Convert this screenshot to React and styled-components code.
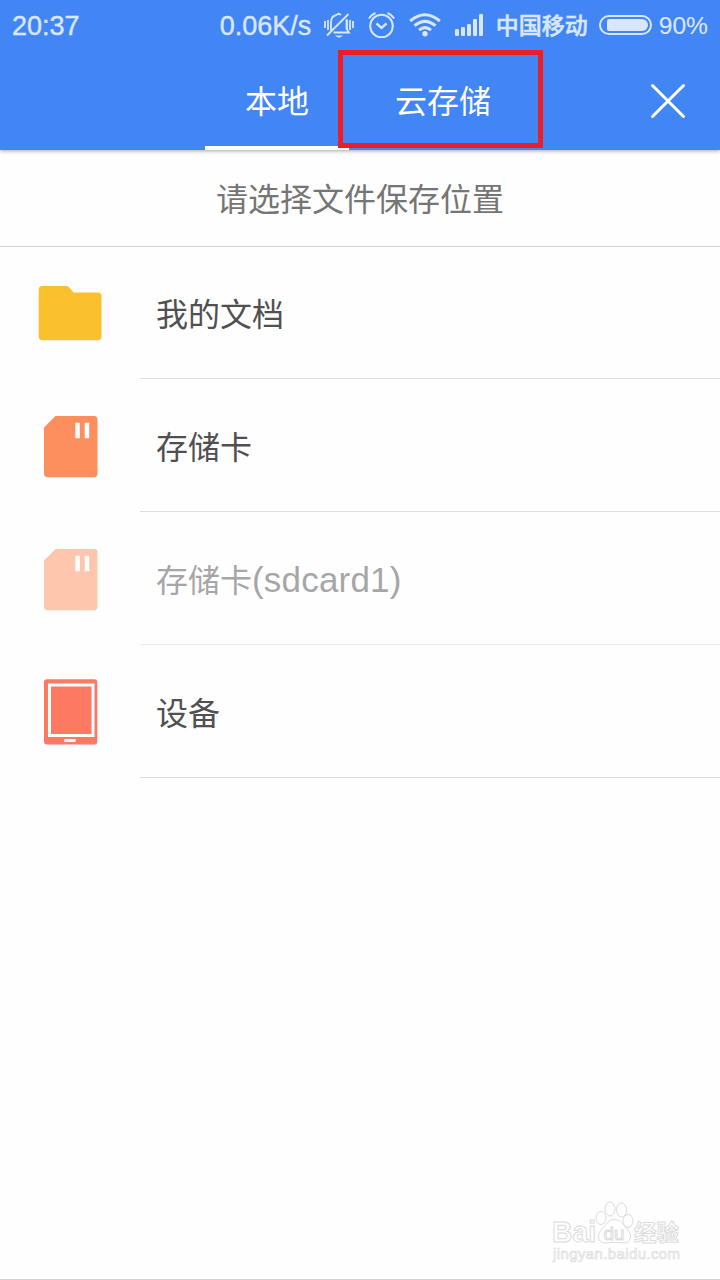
import React from "react";
import styled, { createGlobalStyle } from "styled-components";

const GlobalStyle = createGlobalStyle`
  * {
    box-sizing: border-box;
  }
  body {
    margin: 0;
    background-color: #fefefe;
  }
`;

const Screen = styled.div`
  position: relative;
  display: flex;
  flex-direction: column;
  width: 720px;
  height: 1280px;
  border-bottom: 1px solid #d2d2d2;
  background-color: #fefefe;
  font-family: "Liberation Sans", "Noto Sans CJK SC", sans-serif;
  overflow: hidden;
`;

const Header = styled.header`
  height: 150px;
  flex: none;
  background-color: #4285f5;
  box-shadow: 0 1px 4px rgba(0, 0, 0, 0.35);
`;

const StatusBar = styled.div`
  display: flex;
  align-items: center;
  height: 50px;
  padding: 0 12px;
  color: #d9e7fd;
`;

const StatusText = styled.span`
  font-size: ${(props) => props.$size || 27}px;
  line-height: 50px;
  height: 48px;
  white-space: nowrap;
  -webkit-text-stroke: ${(props) => props.$stroke || 0.4}px #d9e7fd;
`;

const Speed = styled(StatusText)`
  margin-left: auto;
  margin-right: 13px;
`;

const StatusIcons = styled.div`
  display: flex;
  align-items: center;
  gap: 13.5px;

  svg {
    display: block;
    flex: none;
  }
`;

const Carrier = styled.span`
  width: 92px;
  height: 50px;
  margin-left: 13px;
  margin-right: 11px;
  font-size: 23px;
  font-weight: 500;
  line-height: 52px;
  white-space: nowrap;
  -webkit-text-stroke: 0.5px #d9e7fd;
`;

const Battery = styled.div`
  width: 53px;
  height: 20px;
  margin-right: 7px;
  padding: 2px 2px 2px 6px;
  border: 2px solid #d9e7fd;
  border-radius: 10px;
`;

const BatteryLevel = styled.div`
  height: 12px;
  border-radius: 2px 6px 6px 2px;
  background-color: #d9e7fd;
`;

const TabBar = styled.nav`
  position: relative;
  display: flex;
  gap: 6px;
  height: 100px;
  padding-left: 205px;
`;

const Tab = styled.div`
  height: 100px;
  padding: 0 40px;
  border-bottom: 4px solid ${(props) => (props.$active ? "#fff" : "transparent")};
  color: #fff;
  font-size: 32px;
  line-height: 104px;
  white-space: nowrap;
`;

const CloseButton = styled.div`
  display: flex;
  align-items: center;
  height: 102px;
  margin-left: auto;
  padding-right: 34px;
`;

const Highlight = styled.div`
  position: absolute;
  left: 338px;
  top: 0;
  width: 205px;
  height: 98px;
  border: 5px solid #ee1c25;
`;

const Prompt = styled.div`
  flex: none;
  height: 97px;
  border-bottom: 1px solid #d2d2d2;
  color: #757575;
  font-size: 32px;
  line-height: 100px;
  text-align: center;
`;

const Row = styled.div`
  display: flex;
  flex: none;
  height: ${(props) => props.$height || 133}px;
  opacity: ${(props) => (props.$disabled ? 0.5 : 1)};
`;

const RowIcon = styled.div`
  display: flex;
  align-items: center;
  justify-content: center;
  width: 140px;
`;

const RowLabel = styled.div`
  flex: 1;
  padding-left: 16px;
  border-bottom: 1px solid #dedede;
  color: #505050;
  font-size: 32px;
  line-height: ${(props) => props.$line || 138}px;
`;

const Latin = styled.span`
  font-size: 35px;
  letter-spacing: 0.2px;
`;

const Watermark = styled.svg`
  position: absolute;
  left: 545px;
  top: 1195px;
`;

function MuteIcon() {
  return (
    <svg width="30" height="26" viewBox="0 0 30 26" fill="none" stroke="#d9e7fd" strokeWidth="1.8">
      <path d="M1 9v7M4 8v10M26 8v10M29 9v7M7 19V10.500C7 5.500 9.500 3.500 12.500 3L14.500 1.500 17 3M23 7.500V17.500L25 20.500H9.500" />
      <path d="M22.500 7.500V17M24.500 2L3 23.500" />
      <path d="M11 23.500h8l-3 2h-2z" fill="#d9e7fd" stroke="none" />
    </svg>
  );
}

function AlarmIcon() {
  return (
    <svg width="28" height="26" viewBox="0 0 28 26" fill="none" stroke="#d9e7fd" strokeWidth="2">
      <circle cx="13.500" cy="14" r="11.300" />
      <path d="M8.500 11.500l5 4.500 5-4.500" strokeWidth="2.400" />
      <path d="M.8 6.500Q3.300 2.500 7.500 1M26.200 6.500Q23.700 2.500 19.500 1" />
    </svg>
  );
}

function WifiIcon() {
  return (
    <svg width="32" height="24" viewBox="0 0 32 24" fill="none" stroke="#d9e7fd" strokeWidth="3">
      <path d="M1.200 8Q16-4.500 30.800 8" />
      <path d="M5.500 12.700Q16 4 26.500 12.700" />
      <path d="M10 17.200Q16 12 22 17.200" />
      <circle cx="16" cy="20.800" r="2.700" fill="#d9e7fd" stroke="none" />
    </svg>
  );
}

function SignalIcon() {
  return (
    <svg width="28" height="22" viewBox="0 0 28 22" fill="#d9e7fd">
      <rect x="0" y="15" width="4" height="7" rx="1.200" />
      <rect x="6" y="13" width="4" height="9" rx="1.200" />
      <rect x="12" y="10" width="4" height="12" rx="1.200" />
      <rect x="18" y="5" width="4" height="17" rx="1.200" />
      <rect x="24" y="0" width="4" height="22" rx="1.200" />
    </svg>
  );
}

function FolderIcon() {
  return (
    <svg width="64" height="56" viewBox="0 0 64 56">
      <path
        d="M4.500 1H28.500Q30 1 31 2.200L35.500 7.500H60Q63.500 7.500 63.500 11V51.500Q63.500 55.300 60 55.300H4.500Q.7 55.300.7 51.500V5Q.7 1 4.500 1z"
        fill="#fbc02d"
      />
    </svg>
  );
}

function CardIcon() {
  return (
    <svg width="56" height="64" viewBox="0 0 56 64">
      <path
        d="M13.500 2H52Q55.500 2 55.500 5.500V59.500Q55.500 63.300 52 63.300H6Q2 63.300 2 59.500V13.500z"
        fill="#fd8f5f"
      />
      <path d="M33.300 8.800h4.500v15.500h-4.500zM42.700 8.800h4.500v15.500h-4.500z" fill="#fefefe" />
    </svg>
  );
}

function DeviceIcon() {
  return (
    <svg width="56" height="66" viewBox="0 0 56 66">
      <rect x="2" y=".3" width="53.300" height="65.300" rx="3" fill="#fd7961" />
      <rect x="7.500" y="6" width="43.500" height="50.500" fill="none" stroke="#fefefe" strokeWidth="3" />
      <rect x="22.200" y="60" width="11.500" height="3" rx=".5" fill="#fefefe" />
    </svg>
  );
}

const locations = [
  { icon: FolderIcon, name: "我的文档", height: 132, line: 136 },
  { icon: CardIcon, name: "存储卡" },
  { icon: CardIcon, name: "存储卡", suffix: "(sdcard1)", line: 136, disabled: true },
  { icon: DeviceIcon, name: "设备" },
];

function BaiduMark() {
  return (
    <Watermark width="140" height="70" viewBox="0 0 140 70" fill="#fefefe" stroke="#dcdcdc" strokeWidth="1">
      <text x="7" y="47" fontSize="29" fontWeight="bold" textLength="44" lengthAdjust="spacingAndGlyphs">
        Bai
      </text>
      <ellipse cx="56" cy="23" rx="5" ry="6.500" />
      <ellipse cx="65" cy="14" rx="5" ry="7" />
      <ellipse cx="76.500" cy="15" rx="5" ry="7" />
      <ellipse cx="83" cy="26" rx="5" ry="6.500" />
      <path d="M69.500 24.500C76 24.500 78 30 82 34C88 40 86 48 79 48Q69.500 46.500 60 48C53 48 51 40 57 34C61 30 63 24.500 69.500 24.500z" />
      <text x="58.500" y="45" fontSize="19" textLength="21" lengthAdjust="spacingAndGlyphs">
        du
      </text>
      <text x="89" y="46" fontSize="23" fontWeight="bold" textLength="45" lengthAdjust="spacingAndGlyphs">
        经验
      </text>
      <text x="8" y="64" fontSize="15" strokeWidth="0.7" textLength="127">
        jingyan.baidu.com
      </text>
    </Watermark>
  );
}

function App() {
  return (
    <>
      <GlobalStyle />
      <Screen>
        <Header>
          <StatusBar>
            <StatusText>20:37</StatusText>
            <Speed>0.06K/s</Speed>
            <StatusIcons>
              <MuteIcon />
              <AlarmIcon />
              <WifiIcon />
              <SignalIcon />
            </StatusIcons>
            <Carrier>中国移动</Carrier>
            <Battery>
              <BatteryLevel />
            </Battery>
            <StatusText $size={24.6} $stroke={0.1}>
              90%
            </StatusText>
          </StatusBar>
          <TabBar>
            <Tab $active>本地</Tab>
            <Tab>云存储</Tab>
            <CloseButton>
              <svg width="36" height="36" viewBox="0 0 36 36" stroke="#fff" strokeWidth="3" strokeLinecap="round">
                <path d="M2.500 2.500L33.500 33.500M33.500 2.500L2.500 33.500" />
              </svg>
            </CloseButton>
            <Highlight />
          </TabBar>
        </Header>
        <Prompt>请选择文件保存位置</Prompt>
        {locations.map(({ icon: Icon, name, suffix, height, line, disabled }, i) => (
          <Row key={i} $height={height} $disabled={disabled}>
            <RowIcon>
              <Icon />
            </RowIcon>
            <RowLabel $line={line}>
              {name}
              {suffix && <Latin>{suffix}</Latin>}
            </RowLabel>
          </Row>
        ))}
        <BaiduMark />
      </Screen>
    </>
  );
}

export default App;
